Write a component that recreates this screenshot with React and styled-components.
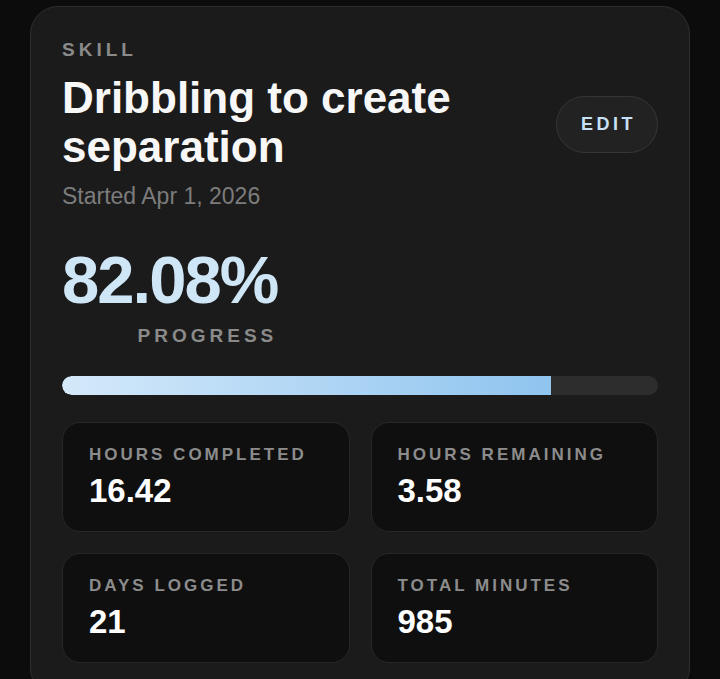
import styled, { createGlobalStyle } from "styled-components";

const GlobalStyle = createGlobalStyle`
	html, body {
		margin: 0;
		padding: 0;
		background: #0c0c0c;
	}
	body {
		font-family: "Liberation Sans", Arial, sans-serif;
		-webkit-font-smoothing: antialiased;
	}
`;

const Page = styled.div`
	padding: 6px 30px 0;
	min-height: 679px;
	box-sizing: border-box;
	overflow: hidden;
`;

const Card = styled.section`
	box-sizing: border-box;
	width: 660px;
	padding: 32px 31px 32px 31px;
	border: 1px solid #2e2e2e;
	border-radius: 28px;
	background-color: #1b1b1b;
`;

const Header = styled.div`
	display: flex;
	align-items: center;
	justify-content: space-between;
	gap: 20px;
`;

const HeaderText = styled.div`
	display: flex;
	flex-direction: column;
`;

const Eyebrow = styled.span`
	font-size: 19px;
	line-height: 22px;
	font-weight: 700;
	letter-spacing: 4px;
	color: #8a8a8a;
	text-transform: uppercase;
`;

const Title = styled.h1`
	margin: 12px 0 0;
	font-size: 44px;
	line-height: 49px;
	font-weight: 700;
	color: #f7f7f7;
`;

const Started = styled.p`
	margin: 12px 0 0;
	font-size: 23px;
	line-height: 27px;
	color: #7c7c7c;
`;

const EditButton = styled.button`
	flex-shrink: 0;
	height: 57px;
	padding: 0 21px 0 24px;
	border: 1px solid #363636;
	border-radius: 29px;
	background-color: #222222;
	color: #c8e1f5;
	font-family: "Liberation Sans", Arial, sans-serif;
	font-size: 18px;
	line-height: 21px;
	font-weight: 700;
	letter-spacing: 3.5px;
	cursor: pointer;
`;

const Progress = styled.div`
	display: inline-flex;
	flex-direction: column;
	align-items: flex-end;
	margin-top: 37px;
`;

const Percent = styled.span`
	font-size: 67px;
	line-height: 66px;
	font-weight: 700;
	letter-spacing: -2px;
	color: #cfe6f7;
`;

const ProgressLabel = styled(Eyebrow)`
	margin-top: 12px;
`;

const Track = styled.div`
	height: 19px;
	margin-top: 29px;
	border-radius: 10px;
	background-color: #2d2d2d;
	overflow: hidden;
`;

const Fill = styled.div`
	height: 100%;
	border-radius: 10px 0 0 10px;
	background: linear-gradient(90deg, #d4e9fa 0%, #8fc4ef 100%);
`;

const StatGrid = styled.div`
	display: grid;
	grid-template-columns: 1fr 1fr;
	gap: 21px;
	margin-top: 27px;
`;

const StatCard = styled.div`
	display: flex;
	flex-direction: column;
	padding: 22px 26px 21px;
	border: 1px solid #272727;
	border-radius: 18px;
	background-color: #0f0f0f;
`;

const StatLabel = styled.span`
	font-size: 17px;
	line-height: 20px;
	font-weight: 700;
	letter-spacing: 3px;
	color: #8c8c8c;
`;

const StatValue = styled.span`
	margin-top: 7px;
	font-size: 33px;
	line-height: 38px;
	font-weight: 700;
	color: #ffffff;
`;

const stats = [
	{ label: "HOURS COMPLETED", value: "16.42" },
	{ label: "HOURS REMAINING", value: "3.58" },
	{ label: "DAYS LOGGED", value: "21" },
	{ label: "TOTAL MINUTES", value: "985" },
];

export default function App() {
	const progress = 82.08;

	return (
		<>
			<GlobalStyle />
			<Page>
				<Card>
					<Header>
						<HeaderText>
							<Eyebrow>Skill</Eyebrow>
							<Title>
								Dribbling to create
								<br />
								separation
							</Title>
							<Started>Started Apr 1, 2026</Started>
						</HeaderText>
						<EditButton>EDIT</EditButton>
					</Header>

					<Progress>
						<Percent>{progress.toFixed(2)}%</Percent>
						<ProgressLabel>Progress</ProgressLabel>
					</Progress>

					<Track>
						<Fill style={{ width: `${progress}%` }} />
					</Track>

					<StatGrid>
						{stats.map((stat) => (
							<StatCard key={stat.label}>
								<StatLabel>{stat.label}</StatLabel>
								<StatValue>{stat.value}</StatValue>
							</StatCard>
						))}
					</StatGrid>
				</Card>
			</Page>
		</>
	);
}
